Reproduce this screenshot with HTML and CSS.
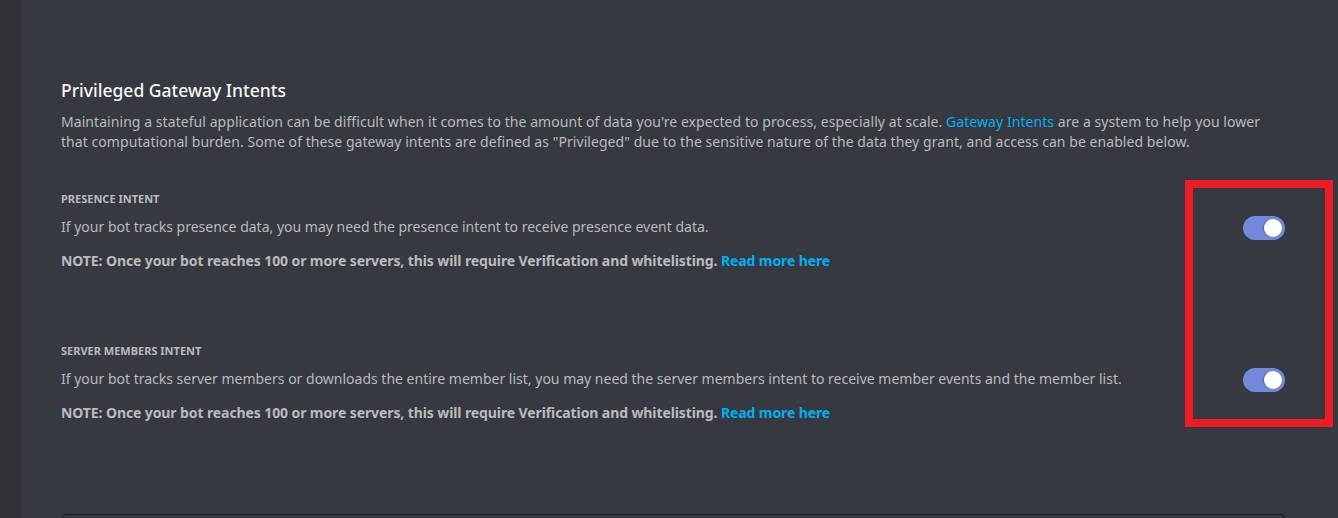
FILE: index.html
```html
<!DOCTYPE html>
<html>
<head>
<meta charset="utf-8">
<link rel="stylesheet" href="styles.css">
</head>
<body>
<div class="app">
  <div class="sidebar"></div>
  <main class="main">
    <section class="intents">
      <h2 class="title">Privileged Gateway Intents</h2>
      <p class="desc">Maintaining a stateful application can be difficult when it comes to the amount of data you're expected to process, especially at scale. <a class="link" href="#">Gateway Intents</a> are a system to help you lower that computational burden. Some of these gateway intents are defined as "Privileged" due to the sensitive nature of the data they grant, and access can be enabled below.</p>

      <div class="intent intent-first">
        <div class="intent-text">
          <div class="label">Presence Intent</div>
          <div class="intent-desc">If your bot tracks presence data, you may need the presence intent to receive presence event data.</div>
          <div class="note">NOTE: Once your bot reaches 100 or more servers, this will require Verification and whitelisting. <a class="note-link" href="#">Read more here</a></div>
        </div>
        <div class="toggle"><span class="knob"></span></div>
      </div>

      <div class="intent intent-second">
        <div class="intent-text">
          <div class="label">Server Members Intent</div>
          <div class="intent-desc">If your bot tracks server members or downloads the entire member list, you may need the server members intent to receive member events and the member list.</div>
          <div class="note">NOTE: Once your bot reaches 100 or more servers, this will require Verification and whitelisting. <a class="note-link" href="#">Read more here</a></div>
        </div>
        <div class="toggle"><span class="knob"></span></div>
      </div>
    </section>
    <div class="next-box"></div>
  </main>
  <div class="highlight"></div>
</div>
</body>
</html>
```
FILE: styles.css
```css
* { box-sizing: border-box; }
html, body { margin: 0; padding: 0; }
body {
  background: #36393f;
  font-family: "Noto Sans", "Open Sans", sans-serif;
  overflow: hidden;
  height: 518px;
}
.app {
  position: relative;
  display: flex;
  height: 518px;
}
.sidebar {
  width: 21px;
  flex: none;
  background: #2f3136;
}
.main {
  flex: 1;
  padding: 78px 53px 0 40px;
  display: flex;
  flex-direction: column;
}
.title {
  margin: 0;
  color: #f6f6f7;
  font-size: 17.5px;
  font-weight: 500;
  line-height: 24px;
}
.desc {
  margin: 10px 0 0;
  color: #b9bbbe;
  font-size: 14px;
  letter-spacing: 0.06px;
  line-height: 20px;
  padding-right: 10px;
}
.link { color: #00b0f4; text-decoration: none; }
.intent {
  display: flex;
  align-items: center;
  justify-content: space-between;
}
.intent-first { margin-top: 39px; }
.intent-second { margin-top: 72px; }
.intent-text { flex: 1; }
.label {
  color: #b9bbbe;
  font-size: 11px;
  font-weight: 700;
  text-transform: uppercase;
  line-height: 16px;
}
.intent-desc {
  margin-top: 10px;
  color: #b9bbbe;
  font-size: 14px;
  line-height: 20px;
}
.note {
  margin-top: 14px;
  color: #b9bbbe;
  font-size: 14px;
  font-weight: 700;
  letter-spacing: -0.1px;
  line-height: 20px;
}
.note-link { color: #00b0f4; text-decoration: none; }
.toggle {
  width: 42px;
  height: 24px;
  border-radius: 12px;
  background: #7289da;
  position: relative;
  flex: none;
  margin-top: -6px;
}
.knob {
  position: absolute;
  right: 3px;
  top: 3px;
  width: 18px;
  height: 18px;
  border-radius: 50%;
  background: #fff;
  box-shadow: -1px 0 2px rgba(0,0,0,0.25);
}
.next-box {
  margin-top: auto;
  height: 4px;
  margin-left: 1px;
  border: 1px solid #17181b;
  border-bottom: none;
  border-radius: 4px 4px 0 0;
  background: #36393f;
}
.highlight {
  position: absolute;
  left: 1185px;
  top: 180px;
  width: 148px;
  height: 247px;
  border: 8px solid #ed1c24;
}
```
